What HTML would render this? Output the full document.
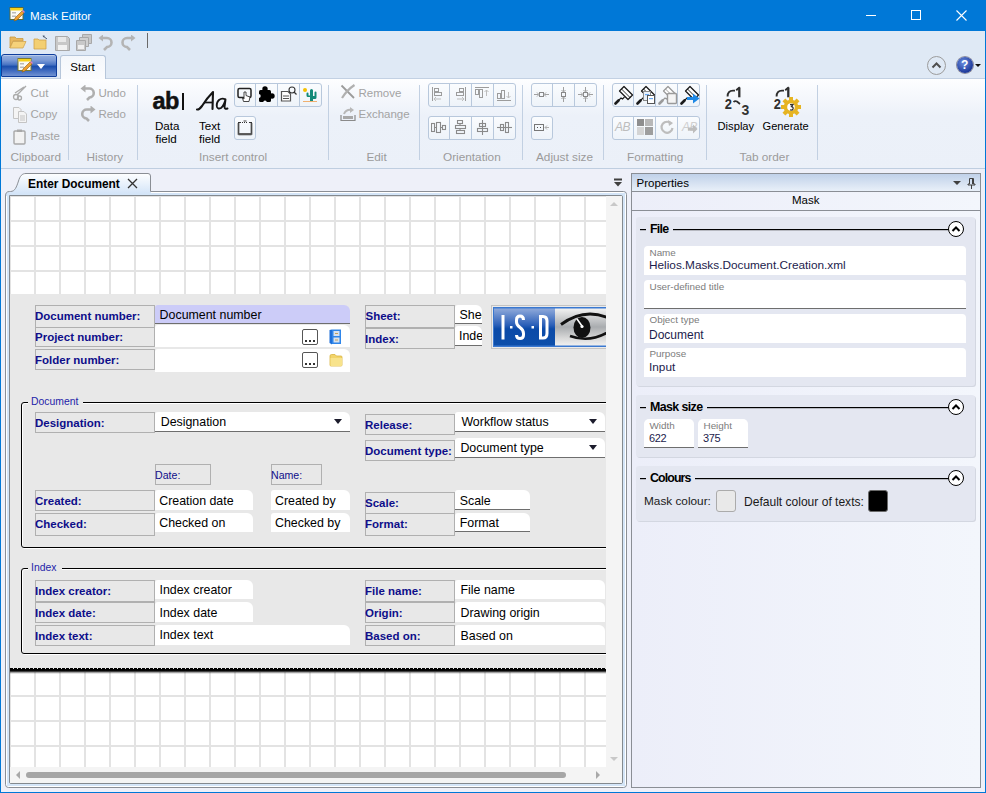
<!DOCTYPE html>
<html><head><meta charset="utf-8">
<style>
*{margin:0;padding:0;box-sizing:border-box}
html,body{width:986px;height:793px;overflow:hidden;background:#EEF0F9;font-family:"Liberation Sans",sans-serif;font-size:12px;color:#000}
.a{position:absolute}
.t{position:absolute;white-space:nowrap;line-height:1}
/* title */
#title{left:0;top:0;width:986px;height:31px;background:#0078D7}
#qat{left:1px;top:31px;width:984px;height:47px;background:#DFE9F5}
#ribbon{left:1px;top:78px;width:984px;height:91px;background:linear-gradient(#FDFEFF 0%,#F7F9FD 15%,#ECF1F9 42%,#EBF0F8 100%);border-top:1px solid #C3D1E3;border-bottom:1px solid #BFCEE0}
.sep{position:absolute;width:1px;background:#C2D0E2}
.glab{position:absolute;top:151.6px;color:#9B9B9B;font-size:11.8px;white-space:nowrap;line-height:1}
.rtxt{position:absolute;font-size:11.5px;white-space:nowrap;line-height:1;color:#A3A3A3}
.bgrp{position:absolute;height:24px;border:1px solid #B8C8DC;border-radius:3px;background:linear-gradient(#FAFCFE,#EEF3F9)}
.bdiv{position:absolute;top:0;width:1px;height:22px;background:#B8C8DC}
/* doc panel */
#docouter{left:5px;top:191px;width:621px;height:597px;border:1px solid #8C9096;border-radius:0 3px 3px 3px;background:#D6E5F7}
#docinner{left:9px;top:195px;width:614px;height:589px;border:1px solid #858B93;border-radius:0 2px 2px 2px;background:#fff;overflow:hidden}
#grid{left:0;top:0;width:597px;height:571px;background-color:#fff;
 background-image:linear-gradient(90deg,#E3E3E3 2px,transparent 2px),linear-gradient(#E3E3E3 2px,transparent 2px);
 background-size:25px 25px;background-position:24px 24px}
#mask{left:0;top:98px;width:622px;height:375px;background:#E8E8E8}
.lab{position:absolute;height:20px;border:1px solid #B2B2B2;background:#E8E8E8;color:#1C1C96;font-weight:bold;font-size:11.4px;line-height:1;white-space:nowrap}
.lab span{position:absolute;left:0;bottom:3px}
.fld{position:absolute;background:#fff;border-radius:0 5px 0 0;font-size:12.4px;color:#000;white-space:nowrap;line-height:1}
.fld span{position:absolute;left:5px;top:3px}
.fb{border-bottom:1px solid #7A7A7A}
.grpbox{position:absolute;border:1px solid #000;border-radius:3px}
.grptitle{position:absolute;background:#E8E8E8;color:#1E1EA0;font-size:11px;line-height:1;padding:0 4px;white-space:nowrap}
.dd{position:absolute;width:0;height:0;border-left:5px solid transparent;border-right:5px solid transparent;border-top:5px solid #1A1A2A}
/* props */
#props{left:631px;top:173px;width:350px;height:615px;border:1px solid #8E9197;background:linear-gradient(90deg,#ECEEF9,#F2F5FC)}
#phead{left:0;top:0;width:348px;height:18px;background:linear-gradient(#C3D3E9,#E6EEF8);border-bottom:1px solid #8E9197}
#pmask{left:0;top:18px;width:348px;height:19px;background:#F0F3FA;border-bottom:1px solid #8E9197}
.pg{position:absolute;left:4px;width:339px;background:#E4E7F1;border-radius:3px;box-shadow:1px 1px 0 #D2D6E0}
.pbox{position:absolute;left:8px;width:322px;height:29px;background:#fff;border-radius:4px 4px 0 0}
.psmall{position:absolute;left:5px;top:4px;font-size:10px;color:#7C7C7C;line-height:1;white-space:nowrap}
.pval{position:absolute;left:5px;top:15px;font-size:12px;color:#1B1B4B;line-height:1;white-space:nowrap}
.circ{position:absolute;width:16px;height:16px;border:1px solid #1A1A1A;border-radius:50%;background:#fff}
</style></head><body>

<!-- window frame -->
<div class="a" id="title"></div>
<div class="a" style="left:0;top:31px;width:1px;height:762px;background:#0078D7"></div>
<div class="a" style="left:985px;top:31px;width:1px;height:762px;background:#0078D7"></div>
<div class="a" style="left:0;top:792px;width:986px;height:1px;background:#0078D7"></div>

<div class="t" style="left:30px;top:9.8px;color:#fff;font-size:11.6px">Mask Editor</div>

<div class="a" id="qat"></div>
<div class="a" id="ribbon"></div>

<!-- title icon -->
<svg class="a" style="left:9px;top:6px" width="16" height="16" viewBox="0 0 16 16">
 <rect x="1" y="1.5" width="13" height="12" fill="#FAFAF5" stroke="#5E6A3A" stroke-width="1"/>
 <rect x="1.5" y="2" width="12" height="2.5" fill="#F7D21A"/>
 <rect x="3" y="6" width="4" height="1.5" fill="#B9B9B9"/><rect x="3" y="9.5" width="4" height="1.5" fill="#B9B9B9"/>
 <path d="M5 15 L6 12 L13 5 L15 7 L8 14 Z" fill="#F0A030" stroke="#8A5A10" stroke-width="0.6"/>
 <path d="M13 5 L14 4 L16 6 L15 7 Z" fill="#E080C0"/>
</svg>
<!-- window buttons -->
<div class="a" style="left:866px;top:15px;width:10px;height:1px;background:#fff"></div>
<div class="a" style="left:911px;top:10px;width:10px;height:10px;border:1px solid #fff"></div>
<svg class="a" style="left:956px;top:10px" width="11" height="11" viewBox="0 0 11 11"><path d="M0.5 0.5 L10.5 10.5 M10.5 0.5 L0.5 10.5" stroke="#fff" stroke-width="1.1"/></svg>

<!-- QAT icons -->
<svg class="a" style="left:9px;top:35px" width="18" height="15" viewBox="0 0 18 15">
 <path d="M1 2 L6 2 L7.5 3.5 L14 3.5 L14 6 L4 6 L1 13 Z" fill="#E8B860" stroke="#C99A40" stroke-width="0.8"/>
 <path d="M1 13 L4 6.5 L17 6.5 L14 13 Z" fill="#F6D27A" stroke="#D0A450" stroke-width="0.8"/>
</svg>
<svg class="a" style="left:33px;top:35px" width="16" height="15" viewBox="0 0 16 15">
 <path d="M1 4 L5 4 L6 5 L13 5 L13 14 L1 14 Z" fill="#F3CF72" stroke="#CFA14A" stroke-width="0.8"/>
 <path d="M10 1 L14 4" stroke="#4A5A70" stroke-width="1"/><path d="M9.5 0.5 L12 0.8 L10.5 2.5 Z" fill="#4A5A70"/>
</svg>
<svg class="a" style="left:55px;top:36px" width="15" height="15" viewBox="0 0 15 15">
 <path d="M0.5 0.5 H12.5 L14.5 2.5 V14.5 H0.5 Z" fill="#C8C8C8" stroke="#A8A8A8"/>
 <rect x="3" y="1" width="8" height="5" fill="#E8E8E8"/><rect x="3" y="9" width="9" height="5" fill="#F2F2F2"/>
</svg>
<svg class="a" style="left:76px;top:34px" width="17" height="17" viewBox="0 0 17 17">
 <path d="M6.5 0.5 H15.5 V9.5 H6.5 Z" fill="#C8C8C8" stroke="#A8A8A8"/>
 <path d="M3.5 3.5 H12.5 V12.5 H3.5 Z" fill="#D0D0D0" stroke="#A8A8A8"/>
 <path d="M0.5 6.5 H9.5 V16.5 H0.5 Z" fill="#C8C8C8" stroke="#A8A8A8"/>
 <rect x="2" y="11" width="6" height="4" fill="#F0F0F0"/>
</svg>
<svg class="a" style="left:98px;top:35px" width="16" height="16" viewBox="0 0 16 16">
 <path d="M3 3 H9 A4.5 4.5 0 0 1 9 12 L6 15" stroke="#B4B4B4" stroke-width="2.6" fill="none"/>
 <path d="M0.5 3 L5 -0.5 L5 6.5 Z" fill="#B4B4B4"/>
</svg>
<svg class="a" style="left:120px;top:35px" width="16" height="16" viewBox="0 0 16 16">
 <path d="M13 3 H7 A4.5 4.5 0 0 0 7 12 L10 15" stroke="#B4B4B4" stroke-width="2.6" fill="none"/>
 <path d="M15.5 3 L11 -0.5 L11 6.5 Z" fill="#B4B4B4"/>
</svg>
<div class="a" style="left:147px;top:33px;width:1px;height:15px;background:#6A6A6A"></div>

<!-- app button -->
<div class="a" style="left:1px;top:54px;width:56px;height:23px;border:1px solid #0F3E9C;border-radius:3px 3px 1px 1px;background:linear-gradient(#93AFDF 0%,#7A9AD6 25%,#4B76C4 45%,#1C4FAD 55%,#4670C2 78%,#7092D1 100%);box-shadow:inset 0 1px 0 rgba(255,255,255,.35)"></div>
<svg class="a" style="left:17px;top:57px" width="16" height="16" viewBox="0 0 16 16">
 <rect x="1" y="1.5" width="13" height="12" fill="#FAFAF5" stroke="#7A7A30" stroke-width="1"/>
 <rect x="1.5" y="2" width="12" height="2.5" fill="#F7D21A"/>
 <rect x="3" y="6" width="4" height="1.5" fill="#B9B9B9"/><rect x="3" y="9.5" width="4" height="1.5" fill="#B9B9B9"/>
 <path d="M5 15 L6 12 L13 5 L15 7 L8 14 Z" fill="#F0A030" stroke="#8A5A10" stroke-width="0.6"/>
 <path d="M13 5 L14 4 L16 6 L15 7 Z" fill="#E080C0"/>
</svg>
<div class="a" style="left:37px;top:64px;width:0;height:0;border-left:4px solid transparent;border-right:4px solid transparent;border-top:5px solid #fff"></div>
<!-- start tab -->
<div class="a" style="left:60px;top:55px;width:46px;height:24px;border:1px solid #B6C6DA;border-bottom:none;border-radius:3px 3px 0 0;background:linear-gradient(#F4F7FB,#FBFCFE)"></div>
<div class="t" style="left:70.3px;top:61px;font-size:11.6px;color:#000">Start</div>
<!-- right tab row controls -->
<div class="a" style="left:927px;top:56px;width:19px;height:19px;border:1px solid #9C9C9C;border-radius:50%"></div>
<svg class="a" style="left:931px;top:61px" width="11" height="8" viewBox="0 0 11 8"><path d="M1.5 6.5 L5.5 2.5 L9.5 6.5" stroke="#505050" stroke-width="2" fill="none"/></svg>
<div class="a" style="left:957px;top:57px;width:16px;height:16px;border-radius:50%;background:radial-gradient(circle at 40% 35%,#6C8EE0,#1E3A9A 70%,#142870);box-shadow:0 0 0 1px #8A8A9A"></div>
<div class="t" style="left:961px;top:59px;font-size:12px;font-weight:bold;color:#fff">?</div>
<div class="a" style="left:975px;top:64px;width:0;height:0;border-left:3px solid transparent;border-right:3px solid transparent;border-top:3px solid #111"></div>

<!-- ribbon separators -->
<div class="sep" style="left:68px;top:85px;height:75px"></div>
<div class="sep" style="left:137px;top:85px;height:75px"></div>
<div class="sep" style="left:328px;top:85px;height:75px"></div>
<div class="sep" style="left:419px;top:85px;height:75px"></div>
<div class="sep" style="left:522px;top:85px;height:75px"></div>
<div class="sep" style="left:603px;top:85px;height:75px"></div>
<div class="sep" style="left:706px;top:85px;height:75px"></div>
<div class="sep" style="left:817px;top:85px;height:75px"></div>

<!-- group labels -->
<div class="glab" style="left:10.5px">Clipboard</div>
<div class="glab" style="left:86.5px">History</div>
<div class="glab" style="left:199px">Insert control</div>
<div class="glab" style="left:366.4px">Edit</div>
<div class="glab" style="left:443px">Orientation</div>
<div class="glab" style="left:536px">Adjust size</div>
<div class="glab" style="left:627px">Formatting</div>
<div class="glab" style="left:739.5px">Tab order</div>

<!-- clipboard -->
<svg class="a" style="left:12px;top:85px" width="16" height="16" viewBox="0 0 16 16">
 <path d="M14 1 L5 10 M12 2 L3 8" stroke="#ABABAB" stroke-width="1.4" fill="none"/>
 <circle cx="4" cy="12" r="2.5" stroke="#ABABAB" stroke-width="1.3" fill="none"/>
 <circle cx="7.5" cy="13" r="2" stroke="#ABABAB" stroke-width="1.3" fill="none"/>
</svg>
<div class="rtxt" style="left:30.5px;top:87.6px">Cut</div>
<svg class="a" style="left:13px;top:107px" width="14" height="16" viewBox="0 0 14 16">
 <path d="M0.5 0.5 H6 L8 2.5 V11.5 H0.5 Z" fill="#F4F4F4" stroke="#C4C4C4"/>
 <path d="M5.5 4.5 H11 L13.5 7 V15.5 H5.5 Z" fill="#F4F4F4" stroke="#C4C4C4"/>
 <path d="M7 9 H12 M7 11 H12 M7 13 H12" stroke="#C4C4C4"/>
</svg>
<div class="rtxt" style="left:30.5px;top:109.3px">Copy</div>
<svg class="a" style="left:13px;top:129px" width="13" height="16" viewBox="0 0 13 16">
 <rect x="1" y="2" width="11" height="13" rx="1" fill="#F2F2F2" stroke="#A8A8A8" stroke-width="1.4"/>
 <rect x="4" y="0.5" width="5" height="2.5" fill="#A8A8A8"/>
</svg>
<div class="rtxt" style="left:30.5px;top:131.3px">Paste</div>


<!-- insert control -->
<div class="t" style="left:152.5px;top:90.2px;font-size:23.5px;font-weight:bold;letter-spacing:-0.5px;color:#111;-webkit-text-stroke:0.5px #111">ab</div>
<div class="a" style="left:182px;top:93px;width:2px;height:17px;background:#111"></div>
<svg class="a" style="left:194px;top:90px" width="36" height="22" viewBox="0 0 36 22">
 <path d="M3 19.5 Q5 20 8 16 Q13 8 19 2 L18.5 19" stroke="#151515" stroke-width="2.1" fill="none" stroke-linecap="round" stroke-linejoin="round"/>
 <path d="M10 12.5 H18" stroke="#151515" stroke-width="1.7"/>
 <path d="M31.5 9.5 Q28 7.5 25 10 Q22 13 23 17 Q24 19.5 27 18 Q30 15.5 31.5 9.5 L30.5 17 Q30.5 19.5 33.5 18.5" stroke="#151515" stroke-width="1.9" fill="none" stroke-linecap="round" stroke-linejoin="round"/>
</svg>
<div class="t" style="left:155px;top:120px;font-size:11.6px;color:#000">Data</div>
<div class="t" style="left:155.5px;top:132.5px;font-size:11.6px;color:#000">field</div>
<div class="t" style="left:199px;top:120px;font-size:11.6px;color:#000">Text</div>
<div class="t" style="left:199px;top:132.5px;font-size:11.6px;color:#000">field</div>
<div class="bgrp" style="left:234px;top:83px;width:88px"><div class="bdiv" style="left:20px"></div><div class="bdiv" style="left:42px"></div><div class="bdiv" style="left:64px"></div></div>
<div class="bgrp" style="left:234px;top:116px;width:22px"></div>
<svg class="a" style="left:237px;top:87px" width="16" height="16" viewBox="0 0 16 16">
 <rect x="1" y="1.5" width="13" height="9" rx="1.5" fill="none" stroke="#222" stroke-width="1.5"/>
 <path d="M7 5 V12 L5.5 11 L6.5 14.5 H12 L13 10 L9 8.5 V5 Z" fill="#fff" stroke="#333" stroke-width="0.9"/>
</svg>
<svg class="a" style="left:258px;top:86px" width="17" height="17" viewBox="0 0 17 17">
 <rect x="1" y="4" width="12" height="12" rx="1.5" fill="#000"/>
 <circle cx="7" cy="3" r="2.7" fill="#000"/>
 <circle cx="14" cy="10" r="2.7" fill="#000"/>
 <circle cx="0.6" cy="10" r="2.1" fill="#F3F6FB"/>
 <circle cx="7" cy="16.4" r="1.8" fill="#F3F6FB"/>
</svg>
<svg class="a" style="left:280px;top:86px" width="17" height="16" viewBox="0 0 17 16">
 <path d="M1.5 5.5 H8 L10.5 8 V15 H1.5 Z" fill="#fff" stroke="#555" stroke-width="1.2"/>
 <path d="M3 10 H9 M3 12.5 H9" stroke="#555" stroke-width="1.2"/>
 <circle cx="12" cy="4" r="3" fill="none" stroke="#333" stroke-width="1.1"/><path d="M14 6 L16.5 8.5" stroke="#333" stroke-width="1.3"/>
</svg>
<svg class="a" style="left:302px;top:87px" width="16" height="16" viewBox="0 0 16 16">
 <circle cx="3" cy="3" r="2" fill="#F5C000"/>
 <path d="M8 14 V3.5 A1.5 1.5 0 0 1 11 3.5 V14 Z M11 9 H12.5 V5.5 A1 1 0 0 1 14.5 5.5 V10.5 A1.5 1.5 0 0 1 13 12 H11 Z M8 10 H6 A1.5 1.5 0 0 1 4.5 8.5 V6.5 A1 1 0 0 1 6.5 6.5 V8.5 H8 Z" fill="#128A78"/>
 <path d="M1 14.5 H15" stroke="#F0B070" stroke-width="1"/>
</svg>
<svg class="a" style="left:237px;top:120px" width="16" height="16" viewBox="0 0 16 16">
 <path d="M1.5 3 V14 H14.5 V3" fill="none" stroke="#4A4A4A" stroke-width="1.7"/>
 <path d="M1.5 14.3 H14.5" stroke="#555" stroke-width="2"/>
 <path d="M1 2.5 H4 M12 2.5 H15" stroke="#333" stroke-width="1.2"/>
 <path d="M5 2.5 H11" stroke="#333" stroke-width="1.2" stroke-dasharray="1 1"/>
 <path d="M6.5 1 H9.5" stroke="#444" stroke-width="1"/>
</svg>

<!-- edit -->
<svg class="a" style="left:340px;top:84px" width="16" height="16" viewBox="0 0 16 16">
 <path d="M1.5 1.5 L14 14" stroke="#9A9A9A" stroke-width="1.8"/>
 <path d="M14.5 1 Q7 6 2 14" stroke="#B0B0B0" stroke-width="2.2" fill="none"/>
</svg>
<div class="rtxt" style="left:358.5px;top:87.6px">Remove</div>
<svg class="a" style="left:340px;top:106px" width="16" height="16" viewBox="0 0 16 16">
 <path d="M1 9 V14.5 H15 V9" stroke="#8A8A8A" stroke-width="1.2" fill="none"/>
 <rect x="3" y="10" width="10" height="3" fill="#A8A8A8"/>
 <path d="M4 8 Q6 3 12 4" stroke="#B8B8B8" stroke-width="2" fill="none"/><path d="M10 1 L14 4 L10 7 Z" fill="#B8B8B8"/>
</svg>
<div class="rtxt" style="left:358.5px;top:109.3px">Exchange</div>

<!-- orientation -->
<div class="bgrp" style="left:428px;top:83px;width:88px"><div class="bdiv" style="left:20px"></div><div class="bdiv" style="left:42px"></div><div class="bdiv" style="left:64px"></div></div>
<div class="bgrp" style="left:428px;top:116px;width:88px"><div class="bdiv" style="left:20px"></div><div class="bdiv" style="left:42px"></div><div class="bdiv" style="left:64px"></div></div>
<svg class="a" style="left:431px;top:87px" width="16" height="16" viewBox="0 0 16 16" stroke="#9C9C9C" fill="none" stroke-width="1">
 <path d="M1.5 0 V14"/><rect x="3.5" y="1.5" width="4" height="3"/><rect x="3.5" y="5.5" width="7" height="3"/><path d="M3 12 H10 M3 12 L5 10 M3 12 L5 14" stroke="#BDBDBD"/>
</svg>
<svg class="a" style="left:453px;top:87px" width="16" height="16" viewBox="0 0 16 16" stroke="#9C9C9C" fill="none" stroke-width="1">
 <path d="M12.5 0 V14"/><rect x="6.5" y="1.5" width="4" height="3"/><rect x="3.5" y="5.5" width="7" height="3"/><path d="M4 12 H11 M11 12 L9 10 M11 12 L9 14" stroke="#BDBDBD"/>
</svg>
<svg class="a" style="left:475px;top:87px" width="16" height="16" viewBox="0 0 16 16" stroke="#9C9C9C" fill="none" stroke-width="1">
 <path d="M0 0.5 H14"/><rect x="0.5" y="2.5" width="3" height="5"/><rect x="4.5" y="2.5" width="3" height="8"/><path d="M11.5 3 V9 M11.5 3 L9.5 5 M11.5 3 L13.5 5" stroke="#BDBDBD"/>
</svg>
<svg class="a" style="left:497px;top:87px" width="16" height="16" viewBox="0 0 16 16" stroke="#9C9C9C" fill="none" stroke-width="1">
 <path d="M0 13.5 H14"/><rect x="0.5" y="6.5" width="3" height="5"/><rect x="4.5" y="3.5" width="3" height="8"/><path d="M11.5 5 V11 M11.5 11 L9.5 9 M11.5 11 L13.5 9" stroke="#BDBDBD"/>
</svg>
<svg class="a" style="left:431px;top:120px" width="16" height="16" viewBox="0 0 16 16" stroke="#8A8A8A" fill="none" stroke-width="1.1">
 <rect x="0.5" y="3.5" width="3" height="8"/><rect x="5.5" y="2.5" width="4" height="10"/><rect x="11.5" y="5.5" width="3" height="4"/><path d="M3.5 7.5 H5.5 M9.5 7.5 H11.5"/>
</svg>
<svg class="a" style="left:453px;top:120px" width="16" height="16" viewBox="0 0 16 16" stroke="#8A8A8A" fill="none" stroke-width="1.1">
 <rect x="4.5" y="0.5" width="5" height="3"/><rect x="2.5" y="5.5" width="10" height="3"/><rect x="3.5" y="10.5" width="8" height="3"/><path d="M7 3.5 V5.5 M7 8.5 V10.5"/>
</svg>
<svg class="a" style="left:475px;top:120px" width="16" height="16" viewBox="0 0 16 16" stroke="#8A8A8A" fill="none" stroke-width="1.1">
 <path d="M7.5 0 V15"/><rect x="4.5" y="3.5" width="6" height="3"/><rect x="2.5" y="8.5" width="10" height="3"/>
</svg>
<svg class="a" style="left:497px;top:120px" width="16" height="16" viewBox="0 0 16 16" stroke="#8A8A8A" fill="none" stroke-width="1.1">
 <path d="M0 7.5 H15"/><rect x="3.5" y="4.5" width="3" height="6"/><rect x="8.5" y="2.5" width="3" height="10"/>
</svg>

<!-- adjust size -->
<div class="bgrp" style="left:531px;top:83px;width:66px"><div class="bdiv" style="left:20px"></div><div class="bdiv" style="left:42px"></div></div>
<div class="bgrp" style="left:531px;top:116px;width:22px"></div>
<svg class="a" style="left:534px;top:87px" width="16" height="16" viewBox="0 0 16 16" stroke="#A0A0A0" fill="none" stroke-width="1">
 <rect x="5.5" y="5.5" width="4" height="4" stroke="#888"/><path d="M0 7.5 H4.5 M3 5.5 L5 7.5 L3 9.5 M15 7.5 H10.5 M12 5.5 L10 7.5 L12 9.5"/>
</svg>
<svg class="a" style="left:556px;top:87px" width="16" height="16" viewBox="0 0 16 16" stroke="#A0A0A0" fill="none" stroke-width="1">
 <rect x="5.5" y="5.5" width="4" height="4" stroke="#888"/><path d="M7.5 0 V4.5 M5.5 3 L7.5 5 L9.5 3 M7.5 15 V10.5 M5.5 12 L7.5 10 L9.5 12"/>
</svg>
<svg class="a" style="left:578px;top:87px" width="16" height="16" viewBox="0 0 16 16" stroke="#A0A0A0" fill="none" stroke-width="1">
 <rect x="5.5" y="5.5" width="4" height="4" stroke="#888"/><path d="M0 7.5 H4.5 M3 5.5 L5 7.5 L3 9.5 M15 7.5 H10.5 M12 5.5 L10 7.5 L12 9.5 M7.5 0 V4.5 M5.5 3 L7.5 5 L9.5 3 M7.5 15 V10.5 M5.5 12 L7.5 10 L9.5 12"/>
</svg>
<svg class="a" style="left:534px;top:120px" width="16" height="16" viewBox="0 0 16 16" stroke="#8A8A8A" fill="none" stroke-width="1">
 <rect x="0.5" y="4.5" width="9" height="6" stroke="#777"/><path d="M3 7.5 H4 M6 7.5 H7" stroke="#555"/><path d="M15 7.5 H11 M13 5.5 L11 7.5 L13 9.5" stroke="#B0B0B0"/>
</svg>

<!-- formatting -->
<div class="bgrp" style="left:612px;top:83px;width:88px"><div class="bdiv" style="left:20px"></div><div class="bdiv" style="left:42px"></div><div class="bdiv" style="left:64px"></div></div>
<div class="bgrp" style="left:612px;top:116px;width:88px"><div class="bdiv" style="left:20px"></div><div class="bdiv" style="left:42px"></div><div class="bdiv" style="left:64px"></div></div>
<svg class="a" style="left:614px;top:85px" width="20" height="20" viewBox="0 0 20 20">
 <path d="M5.5 6 L10 1.5 L18.5 10 L14 14.5 Z" fill="#fff" stroke="#1A1A1A" stroke-width="1.3" stroke-linejoin="round"/>
 <path d="M7.5 4 L16.5 13" stroke="#1A1A1A" stroke-width="0.9"/>
 <path d="M10.5 12 L8.5 14 L7 13 L4.5 15.5" stroke="#1A1A1A" stroke-width="1.1" fill="none"/>
 <path d="M4.5 15.5 L1.5 18.5" stroke="#1A1A1A" stroke-width="2.6" stroke-linecap="round"/>
</svg>
<svg class="a" style="left:636px;top:85px" width="20" height="20" viewBox="0 0 20 20">
 <path d="M5.5 6 L10 1.5 L18.5 10 L14 14.5 Z" fill="#fff" stroke="#1A1A1A" stroke-width="1.3" stroke-linejoin="round"/>
 <path d="M7.5 4 L16.5 13" stroke="#1A1A1A" stroke-width="0.9"/>
 <path d="M10.5 12 L8.5 14 L7 13 L4.5 15.5" stroke="#1A1A1A" stroke-width="1.1" fill="none"/>
 <path d="M4.5 15.5 L1.5 18.5" stroke="#1A1A1A" stroke-width="2.6" stroke-linecap="round"/>
 <rect x="7.5" y="6.5" width="7" height="9" fill="#E8F0FA" stroke="#8A8A8A"/><rect x="9" y="9" width="4" height="1.2" fill="#6AA8F0"/>
 <rect x="11.5" y="10.5" width="7" height="8" fill="#fff" stroke="#555"/><rect x="13" y="13" width="4" height="1.2" fill="#6AA8F0"/>
</svg>
<svg class="a" style="left:658px;top:85px" width="20" height="20" viewBox="0 0 20 20">
 <path d="M5.5 6 L10 1.5 L18.5 10 L14 14.5 Z" fill="#fff" stroke="#9A9A9A" stroke-width="1.3" stroke-linejoin="round"/>
 <path d="M7.5 4 L16.5 13" stroke="#9A9A9A" stroke-width="0.9"/>
 <path d="M10.5 12 L8.5 14 L7 13 L4.5 15.5" stroke="#9A9A9A" stroke-width="1.1" fill="none"/>
 <path d="M4.5 15.5 L1.5 18.5" stroke="#9A9A9A" stroke-width="2.6" stroke-linecap="round"/>
 <rect x="9.5" y="8.5" width="9" height="10" rx="1" fill="#F4F4F4" stroke="#9A9A9A" stroke-width="1.4"/>
</svg>
<svg class="a" style="left:680px;top:85px" width="20" height="20" viewBox="0 0 20 20">
 <path d="M5.5 6 L10 1.5 L18.5 10 L14 14.5 Z" fill="#fff" stroke="#1A1A1A" stroke-width="1.3" stroke-linejoin="round"/>
 <path d="M7.5 4 L16.5 13" stroke="#1A1A1A" stroke-width="0.9"/>
 <path d="M10.5 12 L8.5 14 L7 13 L4.5 15.5" stroke="#1A1A1A" stroke-width="1.1" fill="none"/>
 <path d="M4.5 15.5 L1.5 18.5" stroke="#1A1A1A" stroke-width="2.6" stroke-linecap="round"/>
 <path d="M7 12 H13 V8.5 L19.5 13.5 L13 18.5 V15 H7 Z" fill="#1E88E5"/>
</svg>
<div class="t" style="left:615px;top:121px;font-size:12px;font-style:italic;color:#BDBDBD;letter-spacing:-0.5px">AB</div>
<svg class="a" style="left:637px;top:119px" width="16" height="16" viewBox="0 0 16 16">
 <rect x="0" y="0" width="7" height="7" fill="#8E8E8E"/><rect x="8" y="0" width="8" height="7" fill="#B8B8B8"/>
 <rect x="0" y="8" width="7" height="8" fill="#D4D4D4"/><rect x="8" y="8" width="8" height="8" fill="#9E9E9E"/>
</svg>
<svg class="a" style="left:659px;top:119px" width="16" height="16" viewBox="0 0 16 16">
 <path d="M12.5 5 A5.5 5.5 0 1 0 13.5 9" stroke="#BDBDBD" stroke-width="2.2" fill="none"/>
 <path d="M9 1 L14 4 L10 7 Z" fill="#BDBDBD"/>
</svg>
<div class="t" style="left:682px;top:121px;font-size:12px;font-style:italic;color:#CFCFCF;letter-spacing:-0.5px">AB</div>
<svg class="a" style="left:688px;top:124px" width="10" height="10" viewBox="0 0 10 10"><path d="M0 3.5 H5 V0.5 L9.5 5 L5 9.5 V6.5 H0 Z" fill="#BDBDBD"/></svg>

<!-- tab order -->
<svg class="a" style="left:722px;top:85px" width="32" height="32" viewBox="0 0 32 32">
 <path d="M17.3 2.6 V12.3" stroke="#2E2E2E" stroke-width="2.3"/><path d="M17.8 2.3 L14.2 5.2" stroke="#2E2E2E" stroke-width="1.9"/>
 <text x="3" y="24" font-family="Liberation Sans" font-weight="bold" font-size="14" fill="#2E2E2E" transform="scale(0.92,1)">2</text>
 <text x="19.5" y="29.5" font-family="Liberation Sans" font-weight="bold" font-size="14" fill="#333">3</text>
 <path d="M5.6 11.5 Q5.6 5.6 11 5.6 H13" stroke="#2E2E2E" stroke-width="1.9" fill="none"/>
 <path d="M11.5 17 Q13 15.5 15 16.5 L18 19" stroke="#2E2E2E" stroke-width="1.7" fill="none"/>
</svg>
<div class="t" style="left:717.5px;top:121.2px;font-size:11.2px;color:#000">Display</div>
<svg class="a" style="left:771px;top:85px" width="32" height="32" viewBox="0 0 32 32">
 <path d="M17.3 2.6 V12.3" stroke="#2E2E2E" stroke-width="2.3"/><path d="M17.8 2.3 L14.2 5.2" stroke="#2E2E2E" stroke-width="1.9"/>
 <text x="3" y="24" font-family="Liberation Sans" font-weight="bold" font-size="14" fill="#2E2E2E" transform="scale(0.92,1)">2</text>
 <path d="M5.6 11.5 Q5.6 5.6 11 5.6 H13" stroke="#2E2E2E" stroke-width="1.9" fill="none"/>
 <g transform="translate(20,22)" fill="#E6B422">
  <rect x="-2" y="-10" width="4" height="5" transform="rotate(0)"/><rect x="-2" y="-10" width="4" height="5" transform="rotate(45)"/><rect x="-2" y="-10" width="4" height="5" transform="rotate(90)"/><rect x="-2" y="-10" width="4" height="5" transform="rotate(135)"/><rect x="-2" y="-10" width="4" height="5" transform="rotate(180)"/><rect x="-2" y="-10" width="4" height="5" transform="rotate(225)"/><rect x="-2" y="-10" width="4" height="5" transform="rotate(270)"/><rect x="-2" y="-10" width="4" height="5" transform="rotate(315)"/>
  <circle r="7.3"/>
  <circle r="3.8" fill="#fff"/>
  <path d="M-1 -2.5 H2 L0.5 -0.5 Q2.5 0 2 2 Q1.5 3.5 -1 3" stroke="#333" stroke-width="1.3" fill="none" clip-path="circle(3.8px)"/>
 </g>
</svg>
<div class="t" style="left:762.5px;top:121.2px;font-size:11.1px;color:#000">Generate</div>

<!-- history -->
<svg class="a" style="left:80px;top:85px" width="16" height="16" viewBox="0 0 16 16">
 <path d="M4 3.5 H9 A4.5 4.5 0 0 1 9.5 12.5 L7 15" stroke="#AFAFAF" stroke-width="2.6" fill="none"/>
 <path d="M0.5 3.5 L5.5 -0.5 L5.5 7.5 Z" fill="#AFAFAF"/>
</svg>
<div class="rtxt" style="left:98.4px;top:87.6px">Undo</div>
<svg class="a" style="left:80px;top:106px" width="16" height="16" viewBox="0 0 16 16">
 <path d="M12 3.5 H7 A4.5 4.5 0 0 0 6.5 12.5 L9 15" stroke="#AFAFAF" stroke-width="2.6" fill="none"/>
 <path d="M15.5 3.5 L10.5 -0.5 L10.5 7.5 Z" fill="#AFAFAF"/>
</svg>
<div class="rtxt" style="left:98.4px;top:109.3px">Redo</div>


<!-- doc panel -->
<svg class="a" style="left:0;top:0" width="986" height="793">
 <defs><linearGradient id="tg" gradientUnits="userSpaceOnUse" x1="0" y1="174" x2="0" y2="194"><stop offset="0" stop-color="#FDFEFF"/><stop offset="1" stop-color="#D3E4F8"/></linearGradient></defs>
 <path d="M5.5 784.5 V196 Q5.5 191.5 9.5 191.5 H10.5 C15 191.5 16.5 187 18.5 181 C20 176 22 173.5 26 173.5 H148 Q150.5 173.5 150.5 176 V191.5 H623.5 Q626.5 191.5 626.5 194.5 V784.5 Q626.5 787.5 623.5 787.5 H8.5 Q5.5 787.5 5.5 784.5 Z" fill="url(#tg)" stroke="#8A8E95" stroke-width="1"/>
 <path d="M151 192.5 H623 Q625.5 192.5 625.5 195 V784 Q625.5 786.5 623 786.5 H9 Q6.5 786.5 6.5 784 V196" fill="none" stroke="#FFFFFF" stroke-width="1"/>
 <rect x="7" y="193" width="618" height="593" fill="none" stroke="#D5E6F8" stroke-width="0"/>
</svg>
<div class="a" style="left:7px;top:193px;width:618px;height:2px;background:#D4E5F8"></div>
<div class="a" style="left:7px;top:193px;width:2px;height:593px;background:#D4E5F8"></div>
<div class="a" style="left:623px;top:193px;width:2px;height:593px;background:#D4E5F8"></div>
<div class="a" style="left:7px;top:784px;width:618px;height:2px;background:#D4E5F8"></div>
<div class="t" style="left:28px;top:178.9px;font-size:11.9px;font-weight:bold;color:#000">Enter Document</div>
<svg class="a" style="left:127px;top:178px" width="11" height="11" viewBox="0 0 11 11"><path d="M1 1 L10 10 M10 1 L1 10" stroke="#333" stroke-width="1.3"/></svg>
<svg class="a" style="left:613px;top:178px" width="10" height="10" viewBox="0 0 10 10"><rect x="1" y="0.5" width="8" height="2" fill="#404040"/><path d="M1 4 H9 L5 8.5 Z" fill="#404040"/></svg>

<div class="a" style="left:9px;top:195px;width:614px;height:589px;border:1px solid #83898F;border-radius:0 2px 2px 2px;background:#fff"></div>
<div class="a" style="left:10px;top:196px;width:596px;height:571px;overflow:hidden">
 <div class="a" style="left:-10px;top:-196px;width:986px;height:793px">
  <div class="a" id="grid" style="left:10px;top:196px;width:596px;height:571px"></div>
  <div class="a" id="mask" style="left:10px;top:294px;width:622px;height:375px"></div>
  <div class="a" style="left:10px;top:668px;width:622px;height:1px;background:repeating-linear-gradient(90deg,#000 0 3px,#E8E8E8 3px 4px)"></div>
  <div class="a" style="left:10px;top:669px;width:622px;height:5px;background:linear-gradient(#000 0px,#050505 1.8px,rgba(0,0,0,0.45) 3.2px,rgba(0,0,0,0.08) 4.6px,rgba(0,0,0,0) 5px)"></div>
  <!--MASK-->
<div class="a" style="left:35px;top:305px;width:120px;height:23px;border:1px solid #B0B0B0;background:#E8E8E8"></div>
<div class="a" style="left:35px;top:327px;width:120px;height:20px;border:1px solid #B0B0B0;background:#E8E8E8"></div>
<div class="a" style="left:35px;top:349px;width:120px;height:21px;border:1px solid #B0B0B0;background:#E8E8E8"></div>
<div class="t" style="left:35px;top:310.8px;font-size:11.5px;font-weight:bold;color:#0E0E8A">Document number:</div>
<div class="t" style="left:35px;top:331.6px;font-size:11.5px;font-weight:bold;color:#0E0E8A">Project number:</div>
<div class="t" style="left:35px;top:354.8px;font-size:11.5px;font-weight:bold;color:#0E0E8A">Folder number:</div>
<div class="a" style="left:155px;top:305px;width:195px;height:19px;background:#CCCCF8;border-radius:3px 6px 0 0;border-bottom:1px solid #6E6E6E;"></div>
<div class="t" style="left:159.6px;top:309.0px;font-size:12.4px;color:#000">Document number</div>
<div class="a" style="left:155px;top:325px;width:195px;height:22px;background:#fff;border-radius:3px 6px 0 0;"></div>
<div class="a" style="left:155px;top:349px;width:195px;height:23px;background:#fff;border-radius:3px 6px 0 0;"></div>
<div class="a" style="left:302px;top:329px;width:16px;height:16px;border:1px solid #555;border-radius:2px;background:#fff"></div>
<div class="a" style="left:305px;top:340px;width:2px;height:2px;background:#333"></div>
<div class="a" style="left:309px;top:340px;width:2px;height:2px;background:#333"></div>
<div class="a" style="left:313px;top:340px;width:2px;height:2px;background:#333"></div>
<div class="a" style="left:302px;top:352px;width:16px;height:16px;border:1px solid #555;border-radius:2px;background:#fff"></div>
<div class="a" style="left:305px;top:363px;width:2px;height:2px;background:#333"></div>
<div class="a" style="left:309px;top:363px;width:2px;height:2px;background:#333"></div>
<div class="a" style="left:313px;top:363px;width:2px;height:2px;background:#333"></div>
<svg class="a" style="left:329px;top:329px" width="13" height="16" viewBox="0 0 13 16">
 <path d="M0.5 1 L3 0.5 V15.5 L0.5 14 Z" fill="#1E6FD8"/>
 <rect x="3" y="0.5" width="9" height="14.5" fill="#2F86EA"/>
 <rect x="4.5" y="2" width="6" height="5" fill="#D8E2EE"/><rect x="4.5" y="8.5" width="6" height="5" fill="#D8E2EE"/>
 <rect x="6" y="4" width="3" height="1" fill="#C0A060"/><rect x="6" y="10.5" width="3" height="1" fill="#C0A060"/>
</svg>
<svg class="a" style="left:329px;top:353px" width="14" height="14" viewBox="0 0 14 14">
 <path d="M1 3 Q1 1.5 2.5 1.5 H6 L7.5 3 H12 Q13 3 13 4 V12 Q13 13 12 13 H2 Q1 13 1 12 Z" fill="#F2D46A" stroke="#D9B440" stroke-width="0.8"/>
 <path d="M1.5 5 H13 V12 Q13 13 12 13 H2 Q1.5 13 1.5 12 Z" fill="#F8E38C"/>
</svg>
<div class="a" style="left:365px;top:305px;width:90px;height:23px;border:1px solid #B0B0B0;background:#E8E8E8"></div>
<div class="a" style="left:365px;top:328px;width:90px;height:21px;border:1px solid #B0B0B0;background:#E8E8E8"></div>
<div class="t" style="left:365.5px;top:311.2px;font-size:11.5px;font-weight:bold;color:#0E0E8A">Sheet:</div>
<div class="t" style="left:365px;top:334.0px;font-size:11.5px;font-weight:bold;color:#0E0E8A">Index:</div>
<div class="a" style="left:455px;top:305px;width:27px;height:19px;background:#fff;border-radius:3px 6px 0 0;border-bottom:1px solid #6E6E6E;"></div>
<div class="a" style="left:455px;top:326px;width:27px;height:20px;background:#fff;border-radius:3px 6px 0 0;border-bottom:1px solid #6E6E6E;"></div>
<div class="a" style="left:455px;top:305px;width:27px;height:42px;overflow:hidden"><div class="t" style="left:4.5px;top:4px;font-size:12.4px">Sheet</div><div class="t" style="left:4px;top:25px;font-size:12.4px">Index</div></div>
<div class="a" style="left:491px;top:305px;width:145px;height:44px;border:1px solid #C4C4C4;background:#EAEAEA"></div>
<svg class="a" style="left:493px;top:307px" width="140" height="40" viewBox="0 0 140 40">
 <defs>
  <linearGradient id="lb" x1="0" y1="0" x2="0" y2="1"><stop offset="0" stop-color="#8FA9DA"/><stop offset="0.45" stop-color="#2A5FB8"/><stop offset="0.55" stop-color="#0B4AA8"/><stop offset="1" stop-color="#0E4FAA"/></linearGradient>
  <linearGradient id="lg" x1="0" y1="0" x2="0" y2="1"><stop offset="0" stop-color="#F2F2F2"/><stop offset="0.5" stop-color="#A9ACAF"/><stop offset="0.8" stop-color="#D8D8D8"/><stop offset="1" stop-color="#F0F0F0"/></linearGradient>
 </defs>
 <rect x="0" y="0" width="140" height="40" fill="#3A78D0"/>
 <rect x="1" y="1.5" width="61" height="37" fill="url(#lb)"/>
 <rect x="62" y="1.5" width="78" height="37" fill="url(#lg)"/>
 <rect x="8.5" y="8" width="3" height="24.5" fill="#fff"/>
 <rect x="17" y="19" width="2.5" height="2.5" fill="#fff"/>
 <path d="M30.5 13 Q30.5 9 27 9 Q23.5 9 23.5 13 V15 Q23.5 18 27 20.5 Q30.5 23 30.5 26.5 V28 Q30.5 31.5 27 31.5 Q23.5 31.5 23.5 28" fill="none" stroke="#fff" stroke-width="3"/>
 <rect x="38.5" y="19" width="2.5" height="2.5" fill="#fff"/>
 <path d="M46 8 H50 Q55.5 8 55.5 14 V26.5 Q55.5 32.5 50 32.5 H46 Z M49 11 V29.5 H50 Q52.5 29.5 52.5 26 V14.5 Q52.5 11 50 11 Z" fill="#fff" fill-rule="evenodd"/>
 <path d="M68 17.5 Q93 -1 120 13" stroke="#111" stroke-width="2.8" fill="none"/>
 <path d="M77 29 Q99 37 120 22" stroke="#111" stroke-width="2.6" fill="none"/>
 <ellipse cx="89" cy="20.5" rx="8.5" ry="10.5" fill="#111"/>
 <path d="M84 12 L89 19" stroke="#fff" stroke-width="1.6"/><circle cx="89" cy="19.5" r="1.6" fill="#fff"/>
</svg>
<div class="a" style="left:22px;top:403px;width:620px;height:146px;border:1px solid #fff;border-radius:3px"></div>
<div class="a" style="left:21px;top:402px;width:620px;height:146px;border:1px solid #000;border-radius:3px"></div>
<div class="a" style="left:28px;top:396px;width:55px;height:12px;background:#E8E8E8"></div>
<div class="t" style="left:31px;top:397px;font-size:10.4px;color:#1E1EA8">Document</div>
<div class="a" style="left:35px;top:412px;width:120px;height:21px;border:1px solid #B0B0B0;background:#E8E8E8"></div>
<div class="t" style="left:35px;top:418.4px;font-size:11.5px;font-weight:bold;color:#0E0E8A">Designation:</div>
<div class="a" style="left:155px;top:412px;width:195px;height:20px;background:#fff;border-radius:3px 6px 0 0;border-bottom:1px solid #6E6E6E;"></div>
<div class="t" style="left:160.7px;top:416.2px;font-size:12.4px;color:#000">Designation</div>
<div class="a" style="left:334px;top:419px;width:0;height:0;border-left:4.5px solid transparent;border-right:4.5px solid transparent;border-top:5px solid #1C1C2C"></div>
<div class="a" style="left:155px;top:464px;width:56px;height:21px;border:1px solid #B0B0B0;background:#E8E8E8"></div>
<div class="a" style="left:271px;top:464px;width:51px;height:21px;border:1px solid #B0B0B0;background:#E8E8E8"></div>
<div class="t" style="left:155px;top:469.6px;font-size:10.6px;font-weight:normal;color:#0E0E8A">Date:</div>
<div class="t" style="left:271px;top:469.6px;font-size:10.6px;font-weight:normal;color:#0E0E8A">Name:</div>
<div class="a" style="left:35px;top:490px;width:120px;height:21px;border:1px solid #B0B0B0;background:#E8E8E8"></div>
<div class="a" style="left:35px;top:513px;width:120px;height:23px;border:1px solid #B0B0B0;background:#E8E8E8"></div>
<div class="t" style="left:35px;top:495.6px;font-size:11.5px;font-weight:bold;color:#0E0E8A">Created:</div>
<div class="t" style="left:35px;top:519.4px;font-size:11.5px;font-weight:bold;color:#0E0E8A">Checked:</div>
<div class="a" style="left:155px;top:490px;width:98px;height:20px;background:#fff;border-radius:3px 6px 0 0;"></div>
<div class="a" style="left:155px;top:513px;width:98px;height:19px;background:#fff;border-radius:3px 6px 0 0;"></div>
<div class="t" style="left:159.2px;top:494.59999999999997px;font-size:12.4px;color:#000">Creation date</div>
<div class="t" style="left:159.2px;top:516.6999999999999px;font-size:12.4px;color:#000">Checked on</div>
<div class="a" style="left:271px;top:490px;width:79px;height:20px;background:#fff;border-radius:3px 6px 0 0;"></div>
<div class="a" style="left:271px;top:513px;width:79px;height:19px;background:#fff;border-radius:3px 6px 0 0;"></div>
<div class="t" style="left:275px;top:494.59999999999997px;font-size:12.4px;color:#000">Created by</div>
<div class="t" style="left:275px;top:516.6999999999999px;font-size:12.4px;color:#000">Checked by</div>
<div class="a" style="left:365px;top:414px;width:90px;height:21px;border:1px solid #B0B0B0;background:#E8E8E8"></div>
<div class="a" style="left:365px;top:440px;width:90px;height:21px;border:1px solid #B0B0B0;background:#E8E8E8"></div>
<div class="t" style="left:365px;top:420.0px;font-size:11.5px;font-weight:bold;color:#0E0E8A">Release:</div>
<div class="t" style="left:365px;top:446.3px;font-size:11.5px;font-weight:bold;color:#0E0E8A">Document type:</div>
<div class="a" style="left:455px;top:412px;width:150px;height:20px;background:#fff;border-radius:3px 6px 0 0;border-bottom:1px solid #6E6E6E;"></div>
<div class="a" style="left:455px;top:438px;width:150px;height:20px;background:#fff;border-radius:3px 6px 0 0;border-bottom:1px solid #6E6E6E;"></div>
<div class="t" style="left:461.4px;top:415.59999999999997px;font-size:12.4px;color:#000">Workflow status</div>
<div class="t" style="left:460.4px;top:441.9px;font-size:12.4px;color:#000">Document type</div>
<div class="a" style="left:589px;top:419px;width:0;height:0;border-left:4.5px solid transparent;border-right:4.5px solid transparent;border-top:5px solid #1C1C2C"></div>
<div class="a" style="left:589px;top:445px;width:0;height:0;border-left:4.5px solid transparent;border-right:4.5px solid transparent;border-top:5px solid #1C1C2C"></div>
<div class="a" style="left:365px;top:492px;width:90px;height:22px;border:1px solid #B0B0B0;background:#E8E8E8"></div>
<div class="a" style="left:365px;top:513px;width:90px;height:23px;border:1px solid #B0B0B0;background:#E8E8E8"></div>
<div class="t" style="left:365px;top:497.8px;font-size:11.5px;font-weight:bold;color:#0E0E8A">Scale:</div>
<div class="t" style="left:365px;top:518.9px;font-size:11.5px;font-weight:bold;color:#0E0E8A">Format:</div>
<div class="a" style="left:455px;top:490px;width:75px;height:20px;background:#fff;border-radius:3px 6px 0 0;border-bottom:1px solid #6E6E6E;"></div>
<div class="a" style="left:455px;top:513px;width:75px;height:19px;background:#fff;border-radius:3px 6px 0 0;border-bottom:1px solid #6E6E6E;"></div>
<div class="t" style="left:459.7px;top:494.7px;font-size:12.4px;color:#000">Scale</div>
<div class="t" style="left:459.7px;top:517.0px;font-size:12.4px;color:#000">Format</div>
<div class="a" style="left:22px;top:569px;width:620px;height:86px;border:1px solid #fff;border-radius:3px"></div>
<div class="a" style="left:21px;top:568px;width:620px;height:86px;border:1px solid #000;border-radius:3px"></div>
<div class="a" style="left:28px;top:561px;width:34px;height:12px;background:#E8E8E8"></div>
<div class="t" style="left:31px;top:563px;font-size:10.4px;color:#1E1EA8">Index</div>
<div class="a" style="left:35px;top:580px;width:120px;height:22px;border:1px solid #B0B0B0;background:#E8E8E8"></div>
<div class="a" style="left:35px;top:602px;width:120px;height:21px;border:1px solid #B0B0B0;background:#E8E8E8"></div>
<div class="a" style="left:35px;top:625px;width:120px;height:21px;border:1px solid #B0B0B0;background:#E8E8E8"></div>
<div class="t" style="left:35px;top:585.9px;font-size:11.5px;font-weight:bold;color:#0E0E8A">Index creator:</div>
<div class="t" style="left:35px;top:607.9px;font-size:11.5px;font-weight:bold;color:#0E0E8A">Index date:</div>
<div class="t" style="left:35px;top:630.5px;font-size:11.5px;font-weight:bold;color:#0E0E8A">Index text:</div>
<div class="a" style="left:155px;top:580px;width:98px;height:19px;background:#fff;border-radius:3px 6px 0 0;"></div>
<div class="a" style="left:155px;top:602px;width:98px;height:20px;background:#fff;border-radius:3px 6px 0 0;"></div>
<div class="a" style="left:155px;top:625px;width:195px;height:20px;background:#fff;border-radius:3px 6px 0 0;"></div>
<div class="t" style="left:159.5px;top:583.8px;font-size:12.4px;color:#000">Index creator</div>
<div class="t" style="left:159.5px;top:606.6px;font-size:12.4px;color:#000">Index date</div>
<div class="t" style="left:159.5px;top:629.4px;font-size:12.4px;color:#000">Index text</div>
<div class="a" style="left:365px;top:580px;width:90px;height:22px;border:1px solid #B0B0B0;background:#E8E8E8"></div>
<div class="a" style="left:365px;top:602px;width:90px;height:21px;border:1px solid #B0B0B0;background:#E8E8E8"></div>
<div class="a" style="left:365px;top:625px;width:90px;height:21px;border:1px solid #B0B0B0;background:#E8E8E8"></div>
<div class="t" style="left:365px;top:585.5px;font-size:11.5px;font-weight:bold;color:#0E0E8A">File name:</div>
<div class="t" style="left:365px;top:607.9px;font-size:11.5px;font-weight:bold;color:#0E0E8A">Origin:</div>
<div class="t" style="left:365px;top:630.8px;font-size:11.5px;font-weight:bold;color:#0E0E8A">Based on:</div>
<div class="a" style="left:455px;top:580px;width:150px;height:19px;background:#fff;border-radius:3px 6px 0 0;"></div>
<div class="a" style="left:455px;top:602px;width:150px;height:20px;background:#fff;border-radius:3px 6px 0 0;"></div>
<div class="a" style="left:455px;top:625px;width:150px;height:20px;background:#fff;border-radius:3px 6px 0 0;"></div>
<div class="t" style="left:460.5px;top:583.9px;font-size:12.4px;color:#000">File name</div>
<div class="t" style="left:460.5px;top:606.6999999999999px;font-size:12.4px;color:#000">Drawing origin</div>
<div class="t" style="left:460.5px;top:629.8px;font-size:12.4px;color:#000">Based on</div>
<!--/MASK-->
 </div>
</div>
<!-- scrollbars -->
<div class="a" style="left:606px;top:196px;width:16px;height:587px;background:#F4F4F4"></div>
<div class="a" style="left:10px;top:767px;width:612px;height:16px;background:#F4F4F4"></div>
<div class="a" style="left:610px;top:202px;width:0;height:0;border-left:4px solid transparent;border-right:4px solid transparent;border-bottom:4px solid #C8C8C8"></div>
<div class="a" style="left:610px;top:757px;width:0;height:0;border-left:4px solid transparent;border-right:4px solid transparent;border-top:4px solid #C8C8C8"></div>
<div class="a" style="left:16px;top:771px;width:0;height:0;border-top:4px solid transparent;border-bottom:4px solid transparent;border-right:4px solid #A8A8A8"></div>
<div class="a" style="left:596px;top:771px;width:0;height:0;border-top:4px solid transparent;border-bottom:4px solid transparent;border-left:4px solid #A8A8A8"></div>
<div class="a" style="left:26px;top:772px;width:540px;height:6px;border-radius:3px;background:#A6A6A6"></div>

<!-- properties -->
<div class="a" style="left:631px;top:173px;width:350px;height:615px;border:1px solid #8A8E95;background:linear-gradient(90deg,#ECEEF9,#F3F6FC)"></div>
<div class="a" style="left:632px;top:174px;width:348px;height:18px;background:linear-gradient(#C0D1E9,#E9F0F9);border-bottom:1px solid #8A8E95"></div>
<div class="a" style="left:632px;top:193px;width:348px;height:17px;background:linear-gradient(90deg,#ECEEF9,#F3F6FC)"></div>
<div class="a" style="left:632px;top:210px;width:348px;height:1px;background:#8A8E95"></div>
<div class="t" style="left:636.5px;top:177.6px;font-size:11.5px;color:#000">Properties</div>
<div class="a" style="left:953px;top:181px;width:0;height:0;border-left:4px solid transparent;border-right:4px solid transparent;border-top:4px solid #404040"></div>
<svg class="a" style="left:967px;top:178px" width="9" height="11" viewBox="0 0 9 11"><path d="M2.5 0.5 H6.5 V6 H8 V7 H1 V6 H2.5 Z" fill="none" stroke="#404040" stroke-width="1"/><path d="M5.5 1 V6" stroke="#404040" stroke-width="1"/><path d="M4.5 7 V11" stroke="#404040" stroke-width="1"/></svg>
<div class="t" style="left:792px;top:195.2px;font-size:11.5px;color:#000">Mask</div>

<!-- File group -->
<div class="a" style="left:636px;top:217px;width:339px;height:169px;border-radius:3px;background:#E4E7F1;box-shadow:1px 1px 0 #D3D7E1"></div>
<div class="a" style="left:640px;top:229px;width:6px;height:1px;background:#000;box-shadow:0 0.5px 0 rgba(0,0,0,.4)"></div>
<div class="t" style="left:650px;top:222.6px;font-size:12.4px;font-weight:bold;color:#000;letter-spacing:-0.7px">File</div>
<div class="a" style="left:673px;top:229px;width:276px;height:1px;background:#000;box-shadow:0 0.5px 0 rgba(0,0,0,.4)"></div>
<div class="a" style="left:948px;top:221px;width:16px;height:16px;border:1.3px solid #000;border-radius:50%;background:#fff"></div>
<svg class="a" style="left:951px;top:225px" width="10" height="8" viewBox="0 0 10 8"><path d="M1.5 6 L5 2.5 L8.5 6" stroke="#000" stroke-width="2" fill="none"/></svg>
<div class="a" style="left:644px;top:246px;width:322px;height:29px;background:#fff;border-radius:4px 4px 0 0"></div>
<div class="a" style="left:644px;top:280px;width:322px;height:29px;background:#fff;border-radius:4px 4px 0 0;border-bottom:1px solid #6E6E6E"></div>
<div class="a" style="left:644px;top:314px;width:322px;height:29px;background:#fff;border-radius:4px 4px 0 0"></div>
<div class="a" style="left:644px;top:348px;width:322px;height:29px;background:#fff;border-radius:4px 4px 0 0"></div>
<div class="t" style="left:649.5px;top:247.6px;font-size:9.9px;color:#7C7C7C">Name</div>
<div class="t" style="left:649px;top:260px;font-size:11.8px;color:#1C1C4C">Helios.Masks.Document.Creation.xml</div>
<div class="t" style="left:649.5px;top:281.6px;font-size:9.9px;color:#7C7C7C">User-defined title</div>
<div class="t" style="left:649.5px;top:315.4px;font-size:9.9px;color:#7C7C7C">Object type</div>
<div class="t" style="left:649px;top:328.7px;font-size:12px;color:#1C1C4C">Document</div>
<div class="t" style="left:649.5px;top:349.4px;font-size:9.9px;color:#7C7C7C">Purpose</div>
<div class="t" style="left:649px;top:362px;font-size:11.8px;color:#1C1C4C">Input</div>

<!-- Mask size group -->
<div class="a" style="left:636px;top:395px;width:339px;height:62px;border-radius:3px;background:#E4E7F1;box-shadow:1px 1px 0 #D3D7E1"></div>
<div class="a" style="left:640px;top:407px;width:6px;height:1px;background:#000;box-shadow:0 0.5px 0 rgba(0,0,0,.4)"></div>
<div class="t" style="left:650px;top:400.9px;font-size:12.4px;font-weight:bold;color:#000;letter-spacing:-0.6px">Mask size</div>
<div class="a" style="left:707px;top:407px;width:242px;height:1px;background:#000;box-shadow:0 0.5px 0 rgba(0,0,0,.4)"></div>
<div class="a" style="left:948px;top:399px;width:16px;height:16px;border:1.3px solid #000;border-radius:50%;background:#fff"></div>
<svg class="a" style="left:951px;top:403px" width="10" height="8" viewBox="0 0 10 8"><path d="M1.5 6 L5 2.5 L8.5 6" stroke="#000" stroke-width="2" fill="none"/></svg>
<div class="a" style="left:644px;top:419px;width:50px;height:29px;background:#fff;border-radius:5px 5px 0 0;border-bottom:1px solid #6E6E6E"></div>
<div class="a" style="left:698px;top:419px;width:50px;height:29px;background:#fff;border-radius:5px 5px 0 0;border-bottom:1px solid #6E6E6E"></div>
<div class="t" style="left:649.5px;top:420.6px;font-size:9.9px;color:#7C7C7C">Width</div>
<div class="t" style="left:649px;top:432.5px;font-size:11px;color:#1C1C4C;letter-spacing:-0.4px">622</div>
<div class="t" style="left:703.5px;top:420.6px;font-size:9.9px;color:#7C7C7C">Height</div>
<div class="t" style="left:703px;top:432.5px;font-size:11px;color:#1C1C4C;letter-spacing:-0.4px">375</div>

<!-- Colours group -->
<div class="a" style="left:636px;top:466px;width:339px;height:55px;border-radius:3px;background:#E4E7F1;box-shadow:1px 1px 0 #D3D7E1"></div>
<div class="a" style="left:640px;top:478px;width:6px;height:1px;background:#000;box-shadow:0 0.5px 0 rgba(0,0,0,.4)"></div>
<div class="t" style="left:650px;top:472.1px;font-size:12.4px;font-weight:bold;color:#000;letter-spacing:-0.9px">Colours</div>
<div class="a" style="left:695px;top:478px;width:254px;height:1px;background:#000;box-shadow:0 0.5px 0 rgba(0,0,0,.4)"></div>
<div class="a" style="left:948px;top:470px;width:16px;height:16px;border:1.3px solid #000;border-radius:50%;background:#fff"></div>
<svg class="a" style="left:951px;top:474px" width="10" height="8" viewBox="0 0 10 8"><path d="M1.5 6 L5 2.5 L8.5 6" stroke="#000" stroke-width="2" fill="none"/></svg>
<div class="t" style="left:644px;top:496.3px;font-size:11.8px;color:#1A1A1A">Mask colour:</div>
<div class="a" style="left:716px;top:490px;width:20px;height:22px;border:1px solid #ABABAB;border-radius:3px;background:#E9E9E9"></div>
<div class="t" style="left:744px;top:496.3px;font-size:12.05px;color:#1A1A1A">Default colour of texts:</div>
<div class="a" style="left:868px;top:490px;width:20px;height:22px;border:1px solid #6A6A6A;border-radius:3px;background:#000"></div>

</body></html>
